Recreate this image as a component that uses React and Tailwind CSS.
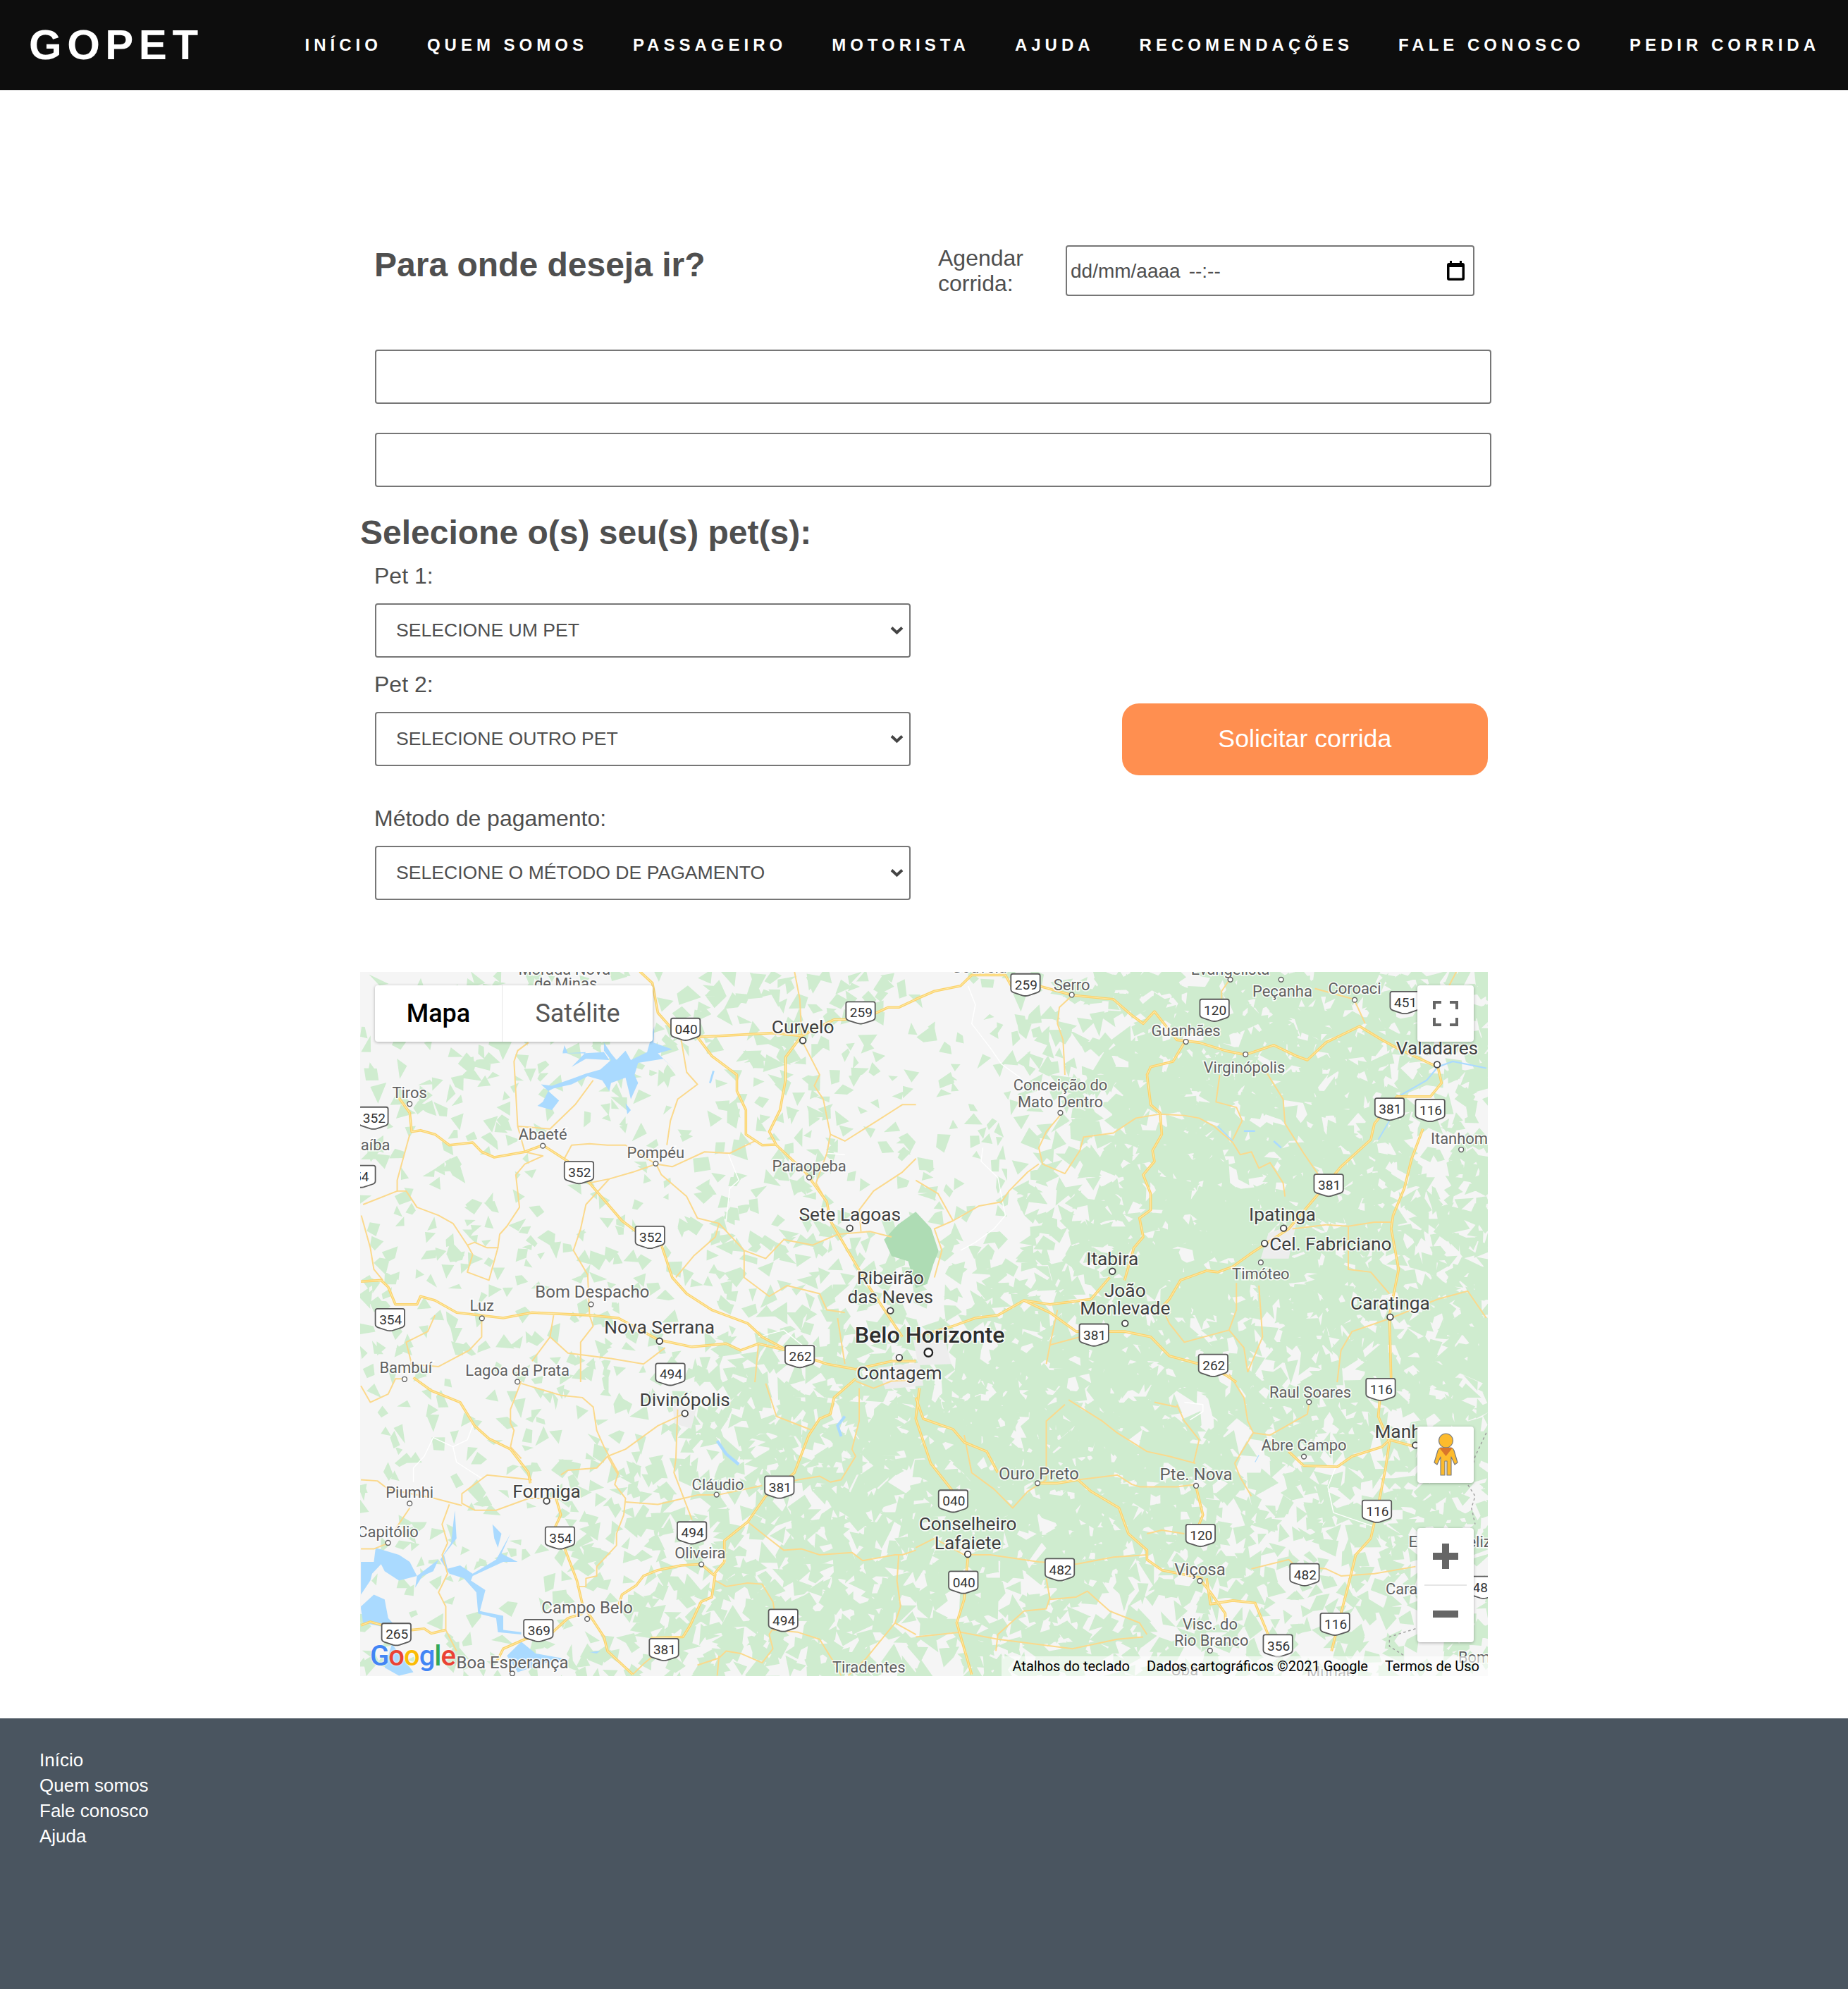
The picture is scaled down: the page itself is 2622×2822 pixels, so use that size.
import React from 'react';

const navLinks = ['INÍCIO', 'QUEM SOMOS', 'PASSAGEIRO', 'MOTORISTA', 'AJUDA', 'RECOMENDAÇÕES', 'FALE CONOSCO', 'PEDIR CORRIDA'];
const footerLinks = ['Início', 'Quem somos', 'Fale conosco', 'Ajuda'];

// map drawing: everything below is in viewBox units (284..1173 x 766..1321)
const crops = {
  a: [0.2834, 277.8, 0.2129, 755.6],
  b: [0.294, 722, 0.2129, 755.6],
  c: [0.2834, 277.8, 0.185, 1083],
  d: [0.294, 722, 0.185, 1083],
};

const toPoints = (crop, pts) => {
  const [sx, ox, sy, oy] = crops[crop];
  return pts.split(' ').map((p) => {
    const [x, y] = p.split(',').map(Number);
    return `${(x * sx + ox).toFixed(1)},${(y * sy + oy).toFixed(1)}`;
  }).join(' ');
};

const mainRoads = [
  ['a', '800,47 835,90 850,200 890,260 960,290 1170,275 1250,285'],
  ['a', '960,290 1000,360 1070,430 1070,490 1095,560 1095,650 1140,690 1180,688'],
  ['a', '1250,285 1205,365 1205,450 1190,560 1160,640 1180,690 1260,790 1320,900 1330,970 1400,1130 1440,1220 1490,1320 1530,1400'],
  ['a', '530,690 600,750 660,830 750,970 790,1010 860,1060 890,1180 930,1240 1000,1300 1100,1350 1140,1400 1210,1450 1320,1500 1400,1520 1500,1490 1568,1490'],
  ['a', '130,515 160,570 165,640 190,635 230,650 270,690 335,680 360,715 395,735 480,715 530,690'],
  ['a', '24,1195 80,1190 100,1215 120,1280 180,1280 190,1250 230,1265 290,1310 420,1330 500,1310 660,1320 740,1330 850,1410 945,1437 1040,1425 1080,1450 1130,1425 1210,1450'],
  ['a', '1568,150 1520,180 1490,180 1450,205 1370,225 1340,225 1250,285'],
  ['b', '0,150 50,120 120,100 150,60 240,60 260,110 330,100 420,135 530,150 580,210 610,240 640,195 700,300 760,310 830,340 884,355 960,320 1020,360 1050,375 1100,310 1190,250 1250,300 1290,330 1390,395'],
  ['b', '720,310 690,380 630,400 620,430 630,540 655,570 660,650 635,710 640,750 610,800 630,870 630,930 600,960 610,1030 585,1070 560,1190'],
  ['b', '1400,400 1410,460 1380,510 1290,510 1230,610 1220,670 1140,770 1080,870 1000,1000 900,1090 850,1140 810,1160 780,1155 710,1190 680,1260 660,1290'],
  ['b', '1360,630 1330,740 1310,850 1280,950 1275,1000 1295,1150 1270,1320 1275,1568'],
  ['b', '290,1265 360,1310 430,1380 560,1380 630,1400 680,1470 760,1500 830,1540 860,1568'],
  ['b', '520,1180 470,1260 360,1280 290,1265 220,1320 160,1330 100,1360 0,1400'],
  ['c', '170,15 220,70 300,120 340,220 380,275 440,320 490,420 495,465'],
  ['c', '565,520 580,600 565,650 590,740 625,880 640,980 700,1120 710,1180 780,1280'],
  ['c', '24,1070 50,1055 85,1070 165,1090 200,1085 220,1105 260,1090'],
  ['c', '1010,850 1000,950 970,970 940,1070 920,1120 830,1125'],
  ['c', '970,810 915,815 850,835 810,860 790,900 750,940 740,990'],
  ['c', '970,810 1005,855 1035,800 1035,710 1100,630 1150,520 1190,475 1230,420 1240,380 1270,260 1300,190 1330,170 1340,100 1400,20'],
  ['c', '640,1020 600,1040 550,1110 480,1130 420,1170 400,1230'],
  ['d', '0,100 20,190 100,235 130,290 190,330 220,420'],
  ['d', '10,60 0,190 40,380 100,500'],
  ['d', '325,465 380,465 435,450 470,500 545,570 570,680 620,750 620,790 660,835 770,870'],
  ['d', '750,470 770,600 760,640'],
  ['d', '765,880 790,930 830,1020 830,1060'],
  ['d', '780,870 790,980 850,965 910,975 945,1110'],
  ['d', '140,770 130,960 110,1060 150,1280'],
  ['d', '1000,330 1040,390 1130,395 1170,350 1250,310 1270,280 1340,310'],
  ['d', '1245,100 1240,180 1270,290 1260,400 1240,560 1220,700 1180,770 1160,900 1140,1020 1115,1180'],
];

const minorRoads = [
  ['a', '160,650 125,820 125,860 30,910'],
  ['a', '25,950 50,1070 60,1150 85,1190'],
  ['a', '125,860 150,860 180,920 240,950 280,980 320,1060 340,1050 375,1070 405,1070 380,1190 320,1160 335,1095 320,1060'],
  ['a', '405,1070 410,1020 430,990 465,920 455,800 480,760 530,730 480,715'],
  ['a', '480,715 460,620 450,380 460,340 490,310'],
  ['a', '460,620 550,630 620,540 670,450'],
  ['a', '590,740 610,690 660,685 710,690 760,690 845,760 860,800 930,880 960,960 1020,980 1090,1080 1150,1110 1200,1040 1280,1060 1350,1020 1440,1010 1500,1030'],
  ['a', '845,760 890,770 980,715 1050,720 1120,675'],
  ['a', '660,830 715,815 780,790 845,760'],
  ['a', '875,690 885,600 905,520 960,465 930,420 915,300'],
  ['a', '715,815 650,910 635,1000 615,1080 655,1170 660,1320 670,1360 635,1420 635,1568'],
  ['a', '1090,1080 1090,1180 1160,1250 1210,1210 1300,1240 1320,1300 1370,1310'],
  ['a', '1020,980 1010,1030 950,1100 900,1180'],
  ['a', '560,1320 550,1400 500,1490'],
  ['a', '550,1400 600,1460 720,1480 810,1500 870,1440'],
  ['a', '230,1320 210,1380 150,1420 165,1500'],
  ['a', '360,1330 360,1400 325,1450 240,1510 160,1500'],
  ['a', '1230,47 1245,150 1250,285'],
  ['a', '1250,300 1300,430 1285,470 1310,520 1330,650 1370,675 1460,600 1530,540 1568,540'],
  ['a', '1330,650 1320,720 1290,830 1320,900'],
  ['a', '1568,740 1530,790 1450,860 1410,930 1415,1010'],
  ['a', '1130,1425 1120,1568'],
  ['a', '1350,1330 1370,1500'],
  ['b', '390,575 350,640 330,700 340,760 400,795 440,710 450,660 530,645 590,590 655,575 720,580 760,590 800,620 850,680 870,725 900,715 920,775 950,755 985,830 990,880'],
  ['b', '1100,985 1160,990 1230,975 1275,975'],
  ['b', '1010,1000 1100,985'],
  ['b', '1160,990 1160,1150 1220,1160 1270,1240'],
  ['b', '815,430 805,530 860,550 875,600 850,670'],
  ['b', '940,420 985,520 990,610 1040,720 1080,800'],
  ['b', '400,430 395,300 380,240 385,180 420,135'],
  ['b', '330,760 300,790 250,860 230,900 170,915 100,970 50,1000 70,1080 50,1180'],
  ['b', '100,970 60,870 0,820'],
  ['b', '660,1290 680,1350 720,1420 840,1375 880,1440 890,1530'],
  ['b', '1275,1330 1170,1380 1140,1450 1130,1568'],
  ['b', '1275,1330 1400,1260 1480,1230 1530,1330'],
  ['b', '380,1300 360,1430 350,1500'],
  ['b', '360,1430 440,1400'],
  ['b', '860,1200 860,1300 840,1375'],
  ['b', '920,1210 930,1400 890,1530'],
  ['b', '1450,47 1430,100'],
  ['b', '1070,110 1175,150 1205,240'],
  ['b', '820,150 820,120 840,80'],
  ['c', '470,30 440,150 440,210 450,240 440,310 470,360'],
  ['c', '470,40 580,90 640,100 670,140 680,240 700,310 740,420 730,470 760,530 755,600 735,680 735,730 680,820 680,860 650,870 650,905 625,905'],
  ['c', '500,450 375,430 305,510 305,550 340,580 400,580 490,530 565,530'],
  ['c', '24,450 70,455 100,490 230,530 305,560'],
  ['c', '270,555 250,640 265,720 250,770 265,850 240,930 260,990 260,1090 290,1180'],
  ['c', '160,570 120,660'],
  ['c', '100,720 60,745 24,745'],
  ['c', '905,150 900,360 895,420 915,500 945,620'],
  ['c', '920,170 850,220 760,320 710,350 680,400 600,410 580,430'],
  ['c', '710,350 740,430'],
  ['c', '760,545 850,555 920,530 960,515 1015,515 1140,475'],
  ['c', '1100,630 1150,690 1200,750 1250,745 1300,770 1390,760 1420,795 1510,770 1530,770 1568,750'],
  ['c', '1010,880 1040,905 1100,890 1140,895 1170,970 1180,1060 1160,1110 1170,1170 1140,1230 1080,1190 1040,1180 1020,1210 960,1240'],
  ['c', '1170,1090 1240,1100 1300,1130 1340,1230 1360,1285'],
  ['c', '1400,30 1450,60 1500,30 1568,25'],
  ['c', '1410,60 1410,200 1390,320 1400,350 1360,450 1330,460 1300,435 1240,450 1190,470'],
  ['c', '1150,40 1180,180 1280,240'],
  ['c', '1520,770 1515,880 1525,990 1510,1060 1430,1210 1380,1285'],
  ['c', '1510,1060 1568,1110'],
  ['c', '780,1280 810,1235 900,1120'],
  ['c', '1020,1200 1015,1285'],
  ['c', '24,50 50,120 100,85 120,20 145,20'],
  ['d', '435,450 490,440 540,430 580,470 600,480 700,480 750,470'],
  ['d', '0,740 50,700 130,770 200,770 330,800 430,810 530,780 620,770'],
  ['d', '855,380 870,440 900,520'],
  ['d', '855,380 905,250 890,200 880,100 840,0'],
  ['d', '905,250 950,260 1050,170 1055,120'],
  ['d', '900,830 1000,790 1020,820 1100,830 1140,860 1230,850 1340,820'],
  ['d', '350,870 360,960 430,950 460,925 520,1010 600,1060 620,1110'],
  ['d', '360,950 350,1000 290,1010 220,1110 215,1180'],
  ['d', '620,680 660,665 720,680'],
  ['d', '410,110 500,200 540,250 620,330 680,350 750,380'],
  ['d', '130,260 150,420 210,490 260,570 300,500 350,450'],
  ['d', '350,450 350,200 400,130'],
  ['d', '700,130 720,200 760,280 745,380'],
  ['d', '640,120 700,140'],
  ['d', '0,1120 120,1100 220,1130 420,1170 540,1130 610,1120'],
];

const boundaries = [
  ['a', '1045,720 1075,820 1050,850 1040,970'],
  ['a', '1320,720 1370,725'],
  ['a', '1130,1400 1200,1375 1260,1440'],
  ['b', '140,100 160,170 150,240 200,330 230,390 280,440'],
  ['b', '180,700 175,750 220,810 240,950 210,1000 160,1050 120,1080'],
  ['c', '335,220 320,280 280,310 225,270 200,350 170,400 170,460'],
  ['c', '280,310 290,375 360,445'],
  ['d', '720,120 770,130 770,160 735,195'],
  ['d', '1125,400 1105,480 1120,590 1230,650'],
];

const rivers = [
  ['c', '1015,285 1040,340 1075,385', 2.4],
  ['c', '1370,180 1350,220 1360,265', 2.2],
  ['b', '1240,670 1270,600', 1],
  ['b', '1300,505 1370,450 1400,400 1440,380 1530,405', 1.2],
  ['b', '810,620 850,675', 1],
  ['b', '880,638 910,638', 1.4],
  ['b', '960,675 980,700', 1.4],
  ['a', '1005,415 995,460', 1.6],
  ['d', '920,345 910,375', 0.6],
];

const lakes = [
  ['a', '700,310 720,350 735,375 760,340 775,375 820,345 840,250 838,310 890,335 850,350 900,415 865,370 795,385 785,430 795,460 775,520 760,440 720,460 715,490 695,450 655,435 610,465 560,480 545,490 525,465 555,470 610,445 650,425 690,410 720,375 700,340'],
  ['a', '515,545 555,560 575,525 545,490 530,530'],
  ['a', '590,320 585,350 650,345 610,400 650,370 715,375 700,345 640,350 600,350'],
  ['a', '760,535 775,560 765,575'],
  ['c', '285,580 290,700 255,770 265,830 300,815 335,850 400,790 440,680 415,765 460,800 420,800 335,860 330,880 370,920 355,1010 420,1030 420,1090 470,1100 470,1110 405,1100 400,1040 350,1020 345,930 310,870 270,850 245,790 275,720'],
  ['c', '390,640 415,680 405,740 395,700'],
  ['c', '24,800 60,800 65,740 130,770 160,800 180,860 240,790 225,840 195,860 175,910 180,860 130,880 90,840 80,810 55,850 50,880 24,940'],
  ['c', '24,990 60,940 90,960 100,1040 130,1090 30,1060 24,1000'],
  ['c', '110,1150 170,1270 130,1285 90,1250'],
  ['c', '470,1140 510,1190 600,1215 540,1230 460,1270 430,1200'],
  ['c', '660,1185 690,1180 680,1190'],
];

const urbanPatches = [
  '692,1078 725,1074 728,1092 698,1095',
  '720,1056 745,1056 750,1075 724,1076',
  '530,1106 550,1106 545,1126 532,1122',
  '1000,972 1022,964 1016,992 994,992',
];

const bigLabels = [
  ['Curvelo', 633, 809], ['Valadares', 1133, 826], ['Sete Lagoas', 670, 957], ['Ribeirão', 702, 1007],
  ['das Neves', 702, 1022], ['Ipatinga', 1011, 957], ['Cel. Fabriciano', 1049, 980], ['Itabira', 877, 992],
  ['João', 887, 1017], ['Monlevade', 887, 1031], ['Nova Serrana', 520, 1046], ['Contagem', 709, 1082],
  ['Divinópolis', 540, 1103], ['Formiga', 431, 1175], ['Conselheiro', 763, 1201], ['Lafaiete', 763, 1216],
  ['Caratinga', 1096, 1027], ['Manhuaçu', 1118, 1128],
];

const smallLabels = [
  ['Morada Nova', 445, 764], ['de Minas', 446, 775], ['Gouveia', 772, 762], ['Evangelista', 970, 764],
  ['Tiros', 323, 861], ['Abaeté', 428, 894], ['Pompéu', 517, 908], ['Paraopeba', 638, 919], ['aíba', 296, 902],
  ['Bom Despacho', 467, 1018, 13.3], ['Luz', 380, 1029], ['Bambuí', 320, 1078], ['Lagoa da Prata', 408, 1080],
  ['Piumhi', 323, 1176], ['Capitólio', 306, 1207], ['Cláudio', 566, 1170], ['Oliveira', 552, 1224],
  ['Campo Belo', 463, 1267, 13.3], ['Boa Esperança', 404, 1310, 13.3], ['Tiradentes', 685, 1314], ['Serro', 845, 776],
  ['Peçanha', 1011, 781], ['Coroaci', 1068, 779], ['Guanhães', 935, 812], ['Virginópolis', 981, 841],
  ['Conceição do', 836, 855], ['Mato Dentro', 836, 868], ['Itanhomi', 1152, 897], ['Raul Soares', 1033, 1097],
  ['Abre Campo', 1028, 1139], ['Ouro Preto', 819, 1161, 13.3], ['Pte. Nova', 943, 1162, 13.3], ['Visc. do', 954, 1280],
  ['Rio Branco', 955, 1293], ['Timóteo', 994, 1004], ['Viçosa', 946, 1237, 13.3], ['Espera Feliz', 1143, 1215],
  ['Carangola', 1120, 1252], ['Ubá', 934, 1316], ['Muriaé', 1049, 1318], ['Bom Jesus', 1180, 1306],
];

const smallDots = [
  [323, 870], [428, 903], [517, 917], [638, 928], [466, 1028], [380, 1039], [319, 1087], [408, 1089], [323, 1185],
  [306, 1216], [565, 1178], [553, 1233], [463, 1276], [404, 1319], [845, 784], [1010, 772], [1068, 788], [935, 821],
  [982, 831], [836, 877], [1152, 906], [994, 995], [1032, 1105], [1028, 1148], [818, 1169], [943, 1171], [946, 1246],
  [954, 1301], [970, 772],
];

const bigDots = [
  [633, 820], [670, 968], [702, 1033], [709, 1070], [520, 1057], [540, 1114], [431, 1183], [763, 1225], [1133, 839],
  [1012, 968], [997, 980], [877, 1002], [887, 1043], [1096, 1038], [1116, 1139],
];

const shields = [
  ['259', 809, 776], ['259', 679, 798], ['040', 541, 811], ['120', 958, 796], ['451', 1108, 790], ['381', 1096, 874],
  ['116', 1128, 875], ['352', 295, 881], ['352', 457, 924], ['54', 285, 927], ['381', 1048, 934], ['352', 513, 975],
  ['354', 308, 1040], ['381', 863, 1052], ['262', 631, 1069], ['262', 957, 1076], ['494', 529, 1083], ['116', 1089, 1095],
  ['381', 615, 1172], ['040', 752, 1183], ['116', 1086, 1191], ['494', 546, 1208], ['354', 442, 1212], ['120', 947, 1210],
  ['482', 836, 1237], ['040', 760, 1247], ['482', 1029, 1241], ['116', 1053, 1280], ['494', 618, 1277], ['265', 313, 1288],
  ['369', 425, 1285], ['381', 524, 1300], ['356', 1008, 1297], ['482', 1170, 1251],
];

// how much forest each part of the map has, 10 columns by 7 rows
const forest = [
  [0.25, 0.3, 0.35, 0.45, 0.3, 0.15, 0.65, 0.8, 0.8, 0.65],
  [0.3, 0.25, 0.17, 0.3, 0.2, 0.15, 0.65, 0.82, 0.8, 0.4],
  [0.28, 0.18, 0.17, 0.35, 0.32, 0.3, 0.7, 0.88, 0.82, 0.6],
  [0.3, 0.25, 0.27, 0.42, 0.5, 0.6, 0.8, 0.82, 0.7, 0.7],
  [0.25, 0.25, 0.32, 0.6, 0.7, 0.78, 0.85, 0.6, 0.6, 0.75],
  [0.2, 0.25, 0.48, 0.62, 0.75, 0.82, 0.85, 0.58, 0.45, 0.6],
  [0.2, 0.25, 0.42, 0.58, 0.62, 0.62, 0.6, 0.5, 0.45, 0.4],
];

const forestAt = (x, y) => {
  const cx = Math.min(8.999, Math.max(0, (x - 284) / 89 - 0.5));
  const cy = Math.min(5.999, Math.max(0, (y - 766) / 79 - 0.5));
  const i = Math.floor(cx);
  const j = Math.floor(cy);
  const fx = cx - i;
  const fy = cy - j;
  const top = forest[j][i] * (1 - fx) + forest[j][i + 1] * fx;
  const bottom = forest[j + 1][i] * (1 - fx) + forest[j + 1][i + 1] * fx;
  return top * (1 - fy) + bottom * fy;
};

function buildForestPath() {
  let seed = 20211;
  const rand = () => {
    seed = (seed + 0x6d2b79f5) | 0;
    let t = Math.imul(seed ^ (seed >>> 15), 1 | seed);
    t = (t + Math.imul(t ^ (t >>> 7), 61 | t)) ^ t;
    return ((t ^ (t >>> 14)) >>> 0) / 4294967296;
  };
  let d = '';
  const step = 8;
  for (let y = 766; y < 1321; y += step) {
    for (let x = 284; x < 1173; x += step) {
      const density = forestAt(x, y);
      if (rand() > density) continue;
      const r = 2.5 + rand() * 3.5 + density * 9;
      const px = x + rand() * step;
      const py = y + rand() * step;
      const sides = rand() > 0.65 ? 4 : 3;
      const start = rand() * 6.28;
      for (let k = 0; k < sides; k++) {
        const a = start + (k / sides) * 6.28 + (rand() - 0.5) * 1.1;
        const rr = r * (0.5 + rand() * 0.8);
        d += `${k === 0 ? 'M' : 'L'}${(px + Math.cos(a) * rr).toFixed(1)} ${(py + Math.sin(a) * rr).toFixed(1)}`;
      }
      d += 'Z';
    }
  }
  return d;
}

const forestPath = buildForestPath();

function RoadLines({ items, color, width }) {
  return items.map(([crop, pts], i) => (
    <polyline key={i} points={toPoints(crop, pts)} fill="none" stroke={color} strokeWidth={width} strokeLinejoin="round" />
  ));
}

function MapLabel({ text, x, y, size, color, weight = 400 }) {
  return (
    <text
      x={x}
      y={y + size * 0.36}
      textAnchor="middle"
      fontSize={size}
      fontWeight={weight}
      fill={color}
      stroke="#ffffff"
      strokeWidth={1.8}
      strokeOpacity={0.85}
      paintOrder="stroke"
    >
      {text}
    </text>
  );
}

function MapDrawing() {
  return (
    <svg viewBox="284 766 889 555" className="block w-full h-full font-['Roboto',sans-serif]">
      <rect x="284" y="766" width="889" height="555" fill="#f5f5f5" />
      <path d={forestPath} fill="#cfeccf" />
      <polygon points="722,955 708,965 697,977 703,990 716,994 722,1015 731,1012 736,996 740,986 734,968" fill="#aedcb4" />
      {urbanPatches.map((p) => <polygon key={p} points={p} fill="#ededed" />)}
      {lakes.map(([crop, pts]) => <polygon key={pts} points={toPoints(crop, pts)} fill="#aadaff" />)}
      {rivers.map(([crop, pts, w], i) => (
        <polyline key={i} points={toPoints(crop, pts)} fill="none" stroke="#aadaff" strokeWidth={w} />
      ))}
      <RoadLines items={boundaries} color="#ffffff" width={0.8} />
      <polyline points={toPoints('d', '1530,250 1500,350 1480,470 1500,520 1490,570 1500,640')} fill="none" stroke="#a0a0a0" strokeWidth="0.8" strokeDasharray="2 2" />
      <polyline points={toPoints('d', '1340,1085 1270,1120 1270,1160 1310,1200')} fill="none" stroke="#a0a0a0" strokeWidth="0.8" strokeDasharray="2 2" />
      <RoadLines items={minorRoads} color="#fbd98c" width={1.1} />
      <RoadLines items={mainRoads} color="#fbd36c" width={2} />
      <RoadLines items={mainRoads} color="#fee9a8" width={0.6} />

      {smallLabels.map(([t, x, y, size = 12.2]) => <MapLabel key={t} text={t} x={x} y={y} size={size} color="#616161" />)}
      {bigLabels.map(([t, x, y]) => <MapLabel key={t} text={t} x={x} y={y} size={14.6} color="#404040" />)}
      <MapLabel text="Belo Horizonte" x={733} y={1052} size={17.9} color="#2e2e2e" weight={500} />

      {smallDots.map(([x, y]) => <circle key={`${x}-${y}`} cx={x} cy={y} r="1.9" fill="#ffffff" stroke="#616161" strokeWidth="0.8" />)}
      {bigDots.map(([x, y]) => <circle key={`${x}-${y}`} cx={x} cy={y} r="2.4" fill="#ffffff" stroke="#444444" strokeWidth="1" />)}
      <circle cx="732" cy="1066" r="3.2" fill="#ffffff" stroke="#222222" strokeWidth="1.3" />

      {shields.map(([n, x, y], i) => (
        <g key={i} transform={`translate(${x} ${y})`}>
          <path
            d="M-9.5 -8.5h19q1.5 0 1.5 1.5v10.5q0 2 -2 2.7l-7 2.3q-2.5 .7 -5 0l-7 -2.3q-2 -.7 -2 -2.7v-10.5q0 -1.5 1.5 -1.5z"
            fill="#ffffff"
            stroke="#5a5a5a"
            strokeWidth="1"
          />
          <text y="3.8" textAnchor="middle" fontSize="10.6" fill="#333333">{n}</text>
        </g>
      ))}
    </svg>
  );
}

function CalendarIcon() {
  return (
    <svg width="25" height="28" viewBox="0 0 25 28" className="shrink-0">
      <path d="M4 0h3v3h11V0h3v3h1a3 3 0 0 1 3 3v19a3 3 0 0 1-3 3H3a3 3 0 0 1-3-3V6a3 3 0 0 1 3-3h1z" fill="#000000" />
      <rect x="3.5" y="9" width="18" height="15.5" fill="#ffffff" />
    </svg>
  );
}

function PetSelect({ label, options, className = '' }) {
  return (
    <div className={className}>
      <label className="block h-[40px] leading-[40px] text-[32px] text-[#4f4f4f]">{label}</label>
      <div className="relative mt-[19px] ml-px w-[760px] h-[77px]">
        <select className="block w-full h-full appearance-none pl-[28px] border-2 border-[#767676] rounded-[4px] bg-white text-[26.6px] text-[#4f4f4f]">
          {options.map((o) => <option key={o}>{o}</option>)}
        </select>
        <svg width="19" height="13" viewBox="0 0 19 13" className="absolute right-[10px] top-[32px] pointer-events-none">
          <path d="M2 2.5l7.5 7 7.5-7" fill="none" stroke="#444444" strokeWidth="4" />
        </svg>
      </div>
    </div>
  );
}

export default function App() {
  return (
    <div className="min-h-[2822px] flex flex-col bg-white font-['Liberation_Sans',Arial,sans-serif]">
      {/* Navbar */}
      <header className="h-[128px] shrink-0 flex items-center justify-between pl-[41px] pr-[40px] bg-[#0d0d0d] text-white">
        <a className="text-[60px] leading-none font-bold tracking-[7.5px]">GOPET</a>
        <nav className="flex items-center gap-[64px]">
          {navLinks.map((item) => (
            <a key={item} className="text-[24px] leading-none font-bold tracking-[6px]">{item}</a>
          ))}
        </nav>
      </header>

      {/* Form */}
      <main className="w-[1600px] mx-auto pt-[220px] flex flex-col">
        <div className="flex items-start pl-5">
          <h2 className="w-[800px] pt-[5px] text-[48px] leading-[46px] font-bold text-[#4f4f4f]">Para onde deseja ir?</h2>
          <label className="w-[181px] text-[32px] leading-[36px] text-[#4f4f4f]">Agendar corrida:</label>
          <div className="w-[580px] h-[72px] flex items-center justify-between pl-[5px] pr-[12px] border-2 border-[#767676] rounded-[4px]">
            <div className="pt-[2px] text-[28px] text-[#4f4f4f]">
              <span>dd/mm/aaaa</span>
              <span className="ml-[12px]">--:--</span>
            </div>
            <CalendarIcon />
          </div>
        </div>

        <input className="block mt-[76px] ml-[21px] w-[1584px] h-[77px] border-2 border-[#767676] rounded-[4px] bg-white" />
        <input className="block mt-[41px] ml-[21px] w-[1584px] h-[77px] border-2 border-[#767676] rounded-[4px] bg-white" />

        <h2 className="mt-[39px] text-[48px] leading-[52px] font-bold text-[#4f4f4f]">Selecione o(s) seu(s) pet(s):</h2>

        <div className="flex pl-5">
          <div className="w-[1062px] pt-[15px]">
            <PetSelect label="Pet 1:" options={['SELECIONE UM PET']} />
            <PetSelect label="Pet 2:" options={['SELECIONE OUTRO PET']} className="mt-[18px]" />
            <PetSelect label="Método de pagamento:" options={['SELECIONE O MÉTODO DE PAGAMENTO']} className="mt-[54px]" />
          </div>
          <button className="mt-[216px] w-[520px] h-[102px] rounded-[24px] bg-[#ff8f50] text-white text-[35.7px]">Solicitar corrida</button>
        </div>

        {/* Map */}
        <div className="relative mt-[102px] h-[999px] overflow-hidden">
          <MapDrawing />

          <div className="absolute left-[21px] top-[19px] w-[394px] h-[80px] flex rounded-[4px] bg-white shadow-[0_1px_4px_rgba(0,0,0,0.3)] font-['Roboto',sans-serif] text-[36px]">
            <div className="w-[181px] flex items-center justify-center font-medium text-black border-r border-[#e6e6e6]">Mapa</div>
            <div className="flex-1 flex items-center justify-center text-[#565656]">Satélite</div>
          </div>

          <div className="absolute right-[20px] top-[19px] w-[80px] h-[80px] flex items-center justify-center rounded-[4px] bg-white shadow-[0_1px_4px_rgba(0,0,0,0.3)]">
            <svg width="36" height="36" viewBox="0 0 36 36">
              <path d="M0 0h12v4H4v8H0zM24 0h12v12h-4V4h-8zM0 24h4v8h8v4H0zM32 24h4v12H24v-4h8z" fill="#666666" />
            </svg>
          </div>

          <div className="absolute right-[20px] top-[645px] w-[80px] h-[80px] flex items-center justify-center rounded-[4px] bg-white shadow-[0_1px_4px_rgba(0,0,0,0.3)]">
            <svg width="35" height="62" viewBox="0 0 35 62">
              <circle cx="17.5" cy="11" r="10" fill="#fdbb2d" stroke="#7c7c7c" strokeWidth="1.2" />
              <path d="M10 21H25Q28 22 29 25L34 42L30 45L25 34V60H19V40H16V60H10V34L5 45L1 42L6 25Q7 22 10 21Z" fill="#fdbb2d" stroke="#7c7c7c" strokeWidth="1.2" strokeLinejoin="round" />
              <path d="M8 21H27L17.5 33Z" fill="#d9752b" />
            </svg>
          </div>

          <div className="absolute right-[20px] top-[789px] w-[80px] h-[162px] flex flex-col items-center rounded-[4px] bg-white shadow-[0_1px_4px_rgba(0,0,0,0.3)]">
            <div className="flex-1 flex items-center justify-center">
              <svg width="36" height="36" viewBox="0 0 36 36"><path d="M13 0h10v13h13v10H23v13H13V23H0V13h13z" fill="#666666" /></svg>
            </div>
            <div className="w-[60px] h-[2px] bg-[#e6e6e6]" />
            <div className="flex-1 flex items-center justify-center">
              <svg width="36" height="36" viewBox="0 0 36 36"><path d="M0 13h36v10H0z" fill="#666666" /></svg>
            </div>
          </div>

          <div className="absolute left-[14px] bottom-[5px] flex font-['Roboto',sans-serif] text-[40px] leading-[46px] font-medium tracking-[-1px] [text-shadow:0_0_3px_#ffffff]">
            <span className="text-[#4285f4]">G</span>
            <span className="text-[#ea4335]">o</span>
            <span className="text-[#fbbc05]">o</span>
            <span className="text-[#4285f4]">g</span>
            <span className="text-[#34a853]">l</span>
            <span className="text-[#ea4335]">e</span>
          </div>

          <div className="absolute right-0 bottom-0 h-[28px] w-[690px] flex items-center justify-end gap-[24px] pr-[12px] bg-white/60 font-['Roboto',sans-serif] text-[20px] leading-none text-black">
            <span>Atalhos do teclado</span>
            <span>Dados cartográficos ©2021 Google</span>
            <span>Termos de Uso</span>
          </div>
        </div>
      </main>

      {/* Footer */}
      <footer className="mt-[60px] flex-1 bg-[#4a5560] pl-[56px] pt-[41px] text-[26px] leading-[36px] text-white">
        {footerLinks.map((item) => <div key={item}>{item}</div>)}
      </footer>
    </div>
  );
}
